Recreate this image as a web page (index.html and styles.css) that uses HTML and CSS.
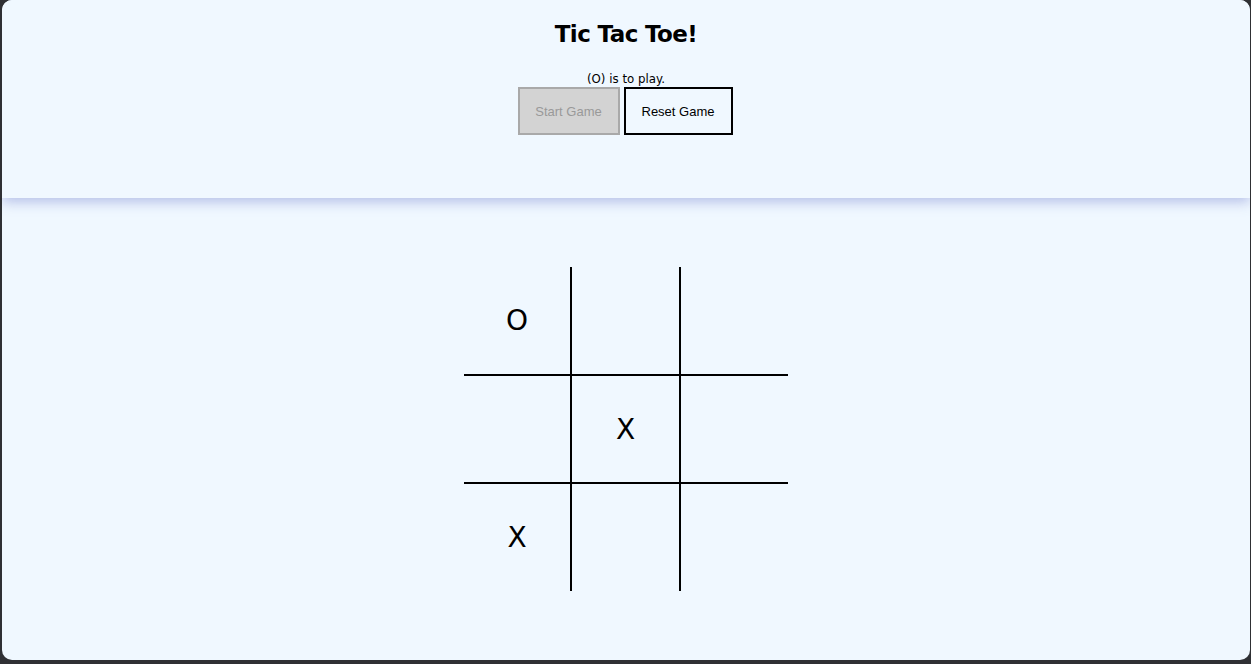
FILE: index.html
```html
<!DOCTYPE html>
<html>
<head>
<meta charset="utf-8">
<title>Tic Tac Toe</title>
<link rel="stylesheet" href="styles.css">
</head>
<body>
<div class="app">
  <header class="header">
    <h1 class="title">Tic Tac Toe!</h1>
    <p class="status">(O) is to play.</p>
    <div class="controls">
      <button class="btn btn-start" disabled>Start Game</button>
      <button class="btn btn-reset">Reset Game</button>
    </div>
  </header>
  <main class="main">
    <div class="board">
      <div class="cell c-r c-b">O</div>
      <div class="cell c-r c-b"></div>
      <div class="cell c-b"></div>
      <div class="cell c-r c-b"></div>
      <div class="cell c-r c-b">X</div>
      <div class="cell c-b"></div>
      <div class="cell c-r">X</div>
      <div class="cell c-r"></div>
      <div class="cell"></div>
    </div>
  </main>
</div>
</body>
</html>
```

FILE: styles.css
```css
html, body {
  margin: 0;
  padding: 0;
  height: 100%;
}
body {
  background: #2f3034;
  padding: 0 1px 4px 2px;
  box-sizing: border-box;
}
.app {
  height: 100%;
  background: #f0f8ff;
  border-radius: 10px;
  overflow: hidden;
  display: flex;
  flex-direction: column;
}
.header {
  height: 198px;
  box-sizing: border-box;
  background: #f0f8ff;
  box-shadow: 0 4px 12px rgba(110, 125, 205, 0.45);
  display: flex;
  flex-direction: column;
  align-items: center;
  padding-top: 20px;
  position: relative;
  z-index: 1;
}
.title {
  margin: 0;
  font-family: "DejaVu Sans", sans-serif;
  font-weight: bold;
  font-size: 23px;
  letter-spacing: -0.6px;
  line-height: 28px;
  color: #000;
}
.status {
  margin: 24px 0 0 0;
  font-family: "DejaVu Sans", sans-serif;
  font-size: 11.8px;
  line-height: 14px;
  color: #000;
}
.controls {
  display: flex;
  gap: 4px;
  margin-top: 1px;
  margin-right: 2px;
}
.btn {
  font-family: "Liberation Sans", Arial, sans-serif;
  font-size: 13px;
  height: 48px;
  box-sizing: border-box;
  padding: 0 15px;
  border-style: solid;
  border-width: 2px;
}
.btn-start {
  width: 102px;
  background: #d3d3d3;
  border-color: #a9a9a9;
  color: #999;
}
.btn-reset {
  width: 109px;
  background: #f0f8ff;
  border-color: #000;
  color: #000;
}
.main {
  flex: 1;
  display: flex;
  justify-content: center;
  padding-top: 69px;
}
.board {
  display: grid;
  grid-template-columns: 108px 109px 107px;
  grid-template-rows: 109px 108px 107px;
  align-self: flex-start;
}
.cell {
  display: flex;
  align-items: center;
  justify-content: center;
  font-family: "DejaVu Sans", sans-serif;
  font-size: 28px;
  color: #000;
}
.c-r {
  border-right: 2px solid #000;
}
.c-b {
  border-bottom: 2px solid #000;
}
```
